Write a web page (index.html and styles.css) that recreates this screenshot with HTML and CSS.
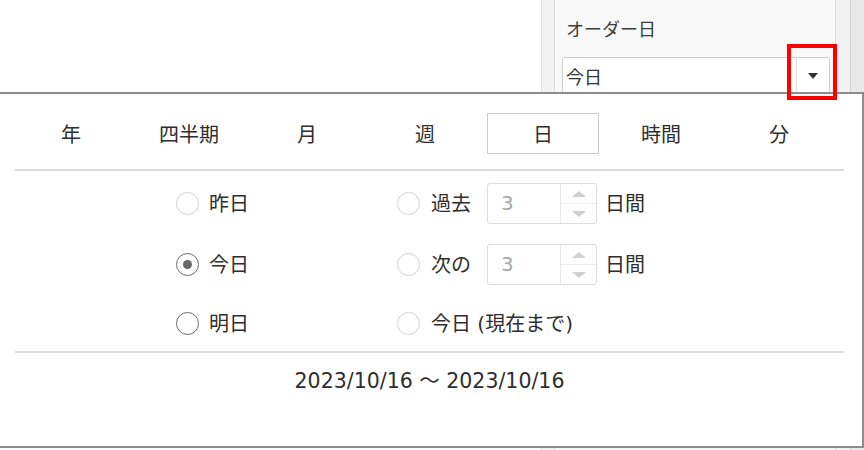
FILE: index.html
```html
<!DOCTYPE html>
<html lang="ja">
<head>
<meta charset="utf-8">
<link rel="stylesheet" href="styles.css">
</head>
<body>
<div class="layout">
  <div class="main"></div>
  <div class="side">
    <div class="gut-l"></div>
    <div class="panel">
      <div class="label">オーダー日</div>
      <div class="select">
        <span class="sel-text">今日</span>
        <span class="sel-btn"><span class="caret"></span></span>
      </div>
    </div>
    <div class="gut-r"></div>
    <div class="scroll"></div>
  </div>
</div>

<div class="popup">
  <div class="tabs">
    <div class="tab">年</div>
    <div class="tab">四半期</div>
    <div class="tab">月</div>
    <div class="tab">週</div>
    <div class="tab active">日</div>
    <div class="tab">時間</div>
    <div class="tab">分</div>
  </div>
  <div class="sep"></div>
  <div class="opts">
    <div class="row">
      <div class="c1"><span class="radio off"></span><span class="txt">昨日</span></div>
      <div class="c2"><span class="radio off"></span><span class="txt lbl">過去</span>
        <span class="num"><span class="num-val">3</span><span class="spin"><span class="up"></span><span class="down"></span></span></span>
        <span class="txt unit">日間</span></div>
    </div>
    <div class="row">
      <div class="c1"><span class="radio on checked"></span><span class="txt">今日</span></div>
      <div class="c2"><span class="radio off"></span><span class="txt lbl">次の</span>
        <span class="num"><span class="num-val">3</span><span class="spin"><span class="up"></span><span class="down"></span></span></span>
        <span class="txt unit">日間</span></div>
    </div>
    <div class="row last">
      <div class="c1"><span class="radio on"></span><span class="txt">明日</span></div>
      <div class="c2"><span class="radio off"></span><span class="txt">今日 (現在まで)</span></div>
    </div>
  </div>
  <div class="sep sep2"></div>
  <div class="range">2023/10/16 ～ 2023/10/16</div>
</div>

<div class="highlight"></div>
</body>
</html>
```

FILE: styles.css
```css
html, body {
  margin: 0;
  padding: 0;
}
body {
  width: 864px;
  height: 450px;
  overflow: hidden;
  background: #fff;
  position: relative;
  font-family: "DejaVu Sans", "Noto Sans CJK JP", sans-serif;
  color: #333;
}
.layout {
  display: flex;
  height: 450px;
}
.main {
  flex: 1;
}
.side {
  display: flex;
  width: 323px;
}
.gut-l {
  width: 12px;
  background: #f2f2f2;
  border-left: 1px solid #e2e2e2;
}
.panel {
  width: 273px;
  background: #f8f8f8;
  border-left: 1px solid #dcdcdc;
  border-right: 1px solid #dcdcdc;
  padding: 16px 0 0 7px;
}
.label {
  padding-left: 4px;
  font-size: 18px;
  line-height: 24px;
  color: #3c3c3c;
  font-family: "Noto Sans CJK JP", sans-serif;
}
.select {
  margin-top: 17px;
  width: 268px;
  height: 40px;
  box-sizing: border-box;
  border: 1px solid #cfcfcf;
  border-radius: 2px;
  background: #fff;
  display: flex;
}
.sel-text {
  flex: 1;
  padding-left: 3px;
  font-size: 18px;
  line-height: 36px;
  font-family: "Noto Sans CJK JP", sans-serif;
  color: #333;
}
.sel-btn {
  width: 33px;
  border-left: 1px solid #e2e2e2;
  display: flex;
  justify-content: center;
  padding-top: 15px;
  box-sizing: border-box;
}
.caret {
  width: 0;
  height: 0;
  border-left: 5px solid transparent;
  border-right: 5px solid transparent;
  border-top: 6px solid #333;
}
.gut-r {
  width: 14px;
  background: #f2f2f2;
}
.scroll {
  width: 13px;
  background: #e8e8e8;
  border-left: 1px solid #d2d2d2;
}

.popup {
  position: absolute;
  left: -2px;
  top: 92px;
  width: 866px;
  height: 356px;
  box-sizing: border-box;
  border: 2px solid #8c8c8c;
  background: #fff;
  z-index: 5;
}
.tabs {
  display: flex;
  margin: 19px 0 0 12px;
  height: 41px;
}
.tab {
  width: 118px;
  display: flex;
  align-items: center;
  justify-content: center;
  font-size: 20px;
  font-family: "Noto Sans CJK JP", sans-serif;
  color: #2e2e2e;
}
.tab.active {
  width: 112px;
  margin: 0 3px;
  box-sizing: border-box;
  border: 1px solid #cccccc;
}
.sep {
  margin: 15px 0 0 15px;
  width: 829px;
  height: 2px;
  background: #dcdcdc;
}
.opts {
  padding-top: 12px;
}
.row {
  display: flex;
  align-items: center;
  height: 41px;
  padding-left: 176px;
  margin-bottom: 20px;
}
.row.last {
  margin-top: -2px;
  margin-bottom: 0;
}
.c1 {
  width: 221px;
  display: flex;
  align-items: center;
  gap: 10px;
}
.c2 {
  display: flex;
  align-items: center;
  gap: 11px;
}
.txt {
  font-size: 20px;
  line-height: 24px;
  color: #2e2e2e;
}
.lbl {
  width: 45px;
}
.unit {
  margin-left: -3px;
}
.radio {
  width: 23px;
  height: 23px;
  box-sizing: border-box;
  border-radius: 50%;
  border: 1.5px solid #d2d2d2;
  display: flex;
  align-items: center;
  justify-content: center;
  flex: none;
}
.radio.on {
  border-color: #6e6e6e;
}
.radio.checked::after {
  content: "";
  width: 9px;
  height: 9px;
  border-radius: 50%;
  background: #6a6a6a;
}
.num {
  width: 110px;
  height: 41px;
  box-sizing: border-box;
  border: 1px solid #dcdcdc;
  border-radius: 3px;
  display: flex;
}
.num-val {
  flex: 1;
  padding-left: 13px;
  font-size: 20px;
  line-height: 39px;
  color: #a8a8a8;
}
.spin {
  width: 35px;
  border-left: 1px solid #e8e8e8;
  display: flex;
  flex-direction: column;
}
.up, .down {
  flex: 1;
  display: flex;
  align-items: center;
  justify-content: center;
}
.up {
  border-bottom: 1px solid #ececec;
}
.up::after {
  content: "";
  border-left: 7px solid transparent;
  border-right: 7px solid transparent;
  border-bottom: 6px solid #d0d0d0;
}
.down::after {
  content: "";
  border-left: 7px solid transparent;
  border-right: 7px solid transparent;
  border-top: 6px solid #d0d0d0;
}
.sep2 {
  margin-top: 7px;
}
.range {
  margin: 16px 0 0 15px;
  width: 829px;
  text-align: center;
  font-size: 20.5px;
  line-height: 24px;
  color: #2e2e2e;
}
.highlight {
  position: absolute;
  left: 787px;
  top: 44px;
  width: 50px;
  height: 56px;
  box-sizing: border-box;
  border: 4px solid #ff0000;
  z-index: 10;
}
```
